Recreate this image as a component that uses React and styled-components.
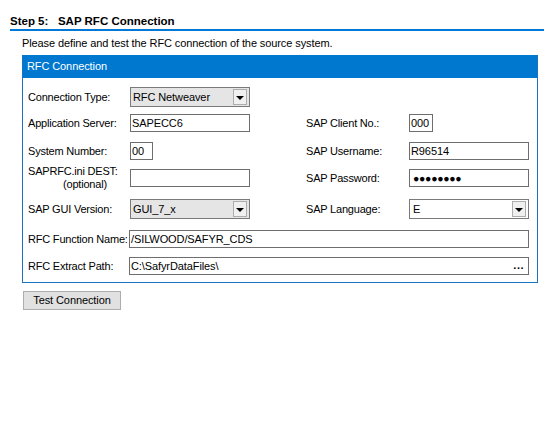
import React from "react"
import styled, { createGlobalStyle } from "styled-components"

const GlobalStyle = createGlobalStyle`
    html, body {
        margin: 0;
        padding: 0;
        background: #ffffff;
    }

    body {
        font-family: "Liberation Sans", Arial, sans-serif;
        font-size: 11px;
        letter-spacing: -0.1px;
        color: #000000;
    }
`

const Page = styled.div`
    width: 554px;
    height: 440px;
    padding-top: 14px;
    box-sizing: border-box;
`

const StepTitle = styled.div`
    margin-left: 10px;
    width: 534px;
    height: 15px;
    line-height: 15px;
    font-size: 11.5px;
    font-weight: 700;
    letter-spacing: 0;
    border-bottom: 2px solid #0078d7;
    white-space: pre;
`

const Description = styled.div`
    margin: 6px 0 0 22px;
    line-height: 13px;
`

const GroupBox = styled.div`
    margin: 5px 0 0 22px;
    width: 516px;
    box-sizing: border-box;
    border: 1px solid #1a72c2;
    border-top-color: #0078d0;
`

const GroupHeader = styled.div`
    height: 22px;
    line-height: 21px;
    padding-left: 4px;
    background: #0078d0;
    color: #ffffff;
`

const GroupBody = styled.div`
    padding: 9px 0 7px 5px;
`

const Row = styled.div`
    display: grid;
    grid-template-columns: ${p => p.$wide ? "101px 400px" : "102px 120px 56px 103px 120px"};
    align-items: center;
    margin-top: ${p => p.$mt || 0}px;
`

const Label = styled.div`
    line-height: 13px;
    white-space: nowrap;
    letter-spacing: -0.2px;
`

const SubLabel = styled.div`
    padding-left: 35px;
`

const TextBox = styled.div`
    position: relative;
    width: ${p => p.$w ? `${p.$w}px` : "100%"};
    height: 18px;
    box-sizing: border-box;
    border: 1px solid #6e6e6e;
    background: #ffffff;
    padding-left: 1px;
    line-height: 16px;
    white-space: nowrap;
`

const Dots = styled.span`
    font-size: 10.5px;
    letter-spacing: -0.3px;
    padding-left: 2px;
`

const Browse = styled.span`
    position: absolute;
    right: 4px;
    top: -1px;
    font-weight: 700;
    letter-spacing: 0.5px;
`

const Select = styled.div`
    display: flex;
    align-items: center;
    justify-content: space-between;
    width: 120px;
    height: 20px;
    box-sizing: border-box;
    border: 1px solid #7a7a7a;
    background: ${p => p.$editable ? "#ffffff" : "#e5e5e5"};
    padding-left: ${p => p.$editable ? 3 : 2}px;
`

const DropButton = styled.div`
    display: flex;
    align-items: center;
    justify-content: center;
    width: 14px;
    height: 16px;
    margin-right: 2px;
    box-sizing: border-box;
    border: 1px solid #adadad;
    background: #f0f0f0;
`

const Arrow = styled.div`
    width: 0;
    height: 0;
    border-left: 4px solid transparent;
    border-right: 4px solid transparent;
    border-top: 4px solid #000000;
    margin-top: 1px;
`

const Button = styled.div`
    margin: 8px 0 0 23px;
    width: 98px;
    height: 19px;
    box-sizing: border-box;
    border: 1px solid #adadad;
    background: #e1e1e1;
    line-height: 17px;
    text-align: center;
`

const Dropdown = ({ value, editable }) => (
    <Select $editable={editable}>
        <span>{value}</span>
        <DropButton><Arrow /></DropButton>
    </Select>
)

const App = () => {
    return (
        <Page>
            <GlobalStyle />
            <StepTitle>{"Step 5:   SAP RFC Connection"}</StepTitle>
            <Description>Please define and test the RFC connection of the source system.</Description>
            <GroupBox>
                <GroupHeader>RFC Connection</GroupHeader>
                <GroupBody>
                    <Row>
                        <Label>Connection Type:</Label>
                        <Dropdown value="RFC Netweaver" />
                    </Row>
                    <Row $mt={7}>
                        <Label>Application Server:</Label>
                        <TextBox>SAPECC6</TextBox>
                        <span />
                        <Label>SAP Client No.:</Label>
                        <TextBox $w={24}>000</TextBox>
                    </Row>
                    <Row $mt={10}>
                        <Label>System Number:</Label>
                        <TextBox $w={23}>00</TextBox>
                        <span />
                        <Label>SAP Username:</Label>
                        <TextBox>R96514</TextBox>
                    </Row>
                    <Row $mt={5}>
                        <Label>
                            SAPRFC.ini DEST:
                            <SubLabel>(optional)</SubLabel>
                        </Label>
                        <TextBox />
                        <span />
                        <Label>SAP Password:</Label>
                        <TextBox><Dots>●●●●●●●●</Dots></TextBox>
                    </Row>
                    <Row $mt={8}>
                        <Label>SAP GUI Version:</Label>
                        <Dropdown value="GUI_7_x" />
                        <span />
                        <Label>SAP Language:</Label>
                        <Dropdown value="E" editable />
                    </Row>
                    <Row $wide $mt={11}>
                        <Label>RFC Function Name:</Label>
                        <TextBox>/SILWOOD/SAFYR_CDS</TextBox>
                    </Row>
                    <Row $wide $mt={9}>
                        <Label>RFC Extract Path:</Label>
                        <TextBox>
                            C:\SafyrDataFiles\
                            <Browse>...</Browse>
                        </TextBox>
                    </Row>
                </GroupBody>
            </GroupBox>
            <Button>Test Connection</Button>
        </Page>
    )
}

export default App
